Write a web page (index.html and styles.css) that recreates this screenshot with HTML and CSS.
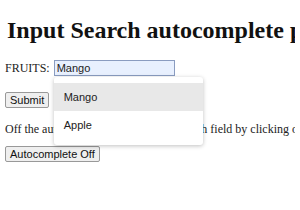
FILE: index.html
```html
<!DOCTYPE html>
<html lang="en">
<head>
    <meta charset="UTF-8">
    <title>Input Search autocomplete</title>
    <link rel="stylesheet" href="styles.css">
</head>
<body>
    <h1>Input Search autocomplete property</h1>
    <form class="search-form">
        <div class="field">
            <label for="fruit">FRUITS:</label>
            <span class="field-wrap">
                <input type="text" id="fruit" class="search-input" value="Mango">
                <ul class="suggestions">
                    <li class="active">Mango</li>
                    <li>Apple</li>
                </ul>
            </span>
        </div>
        <button type="button" class="button">Submit</button>
    </form>
    <p class="note">Off the autocomplete feature of the search field by clicking on the button.</p>
    <button type="button" class="button">Autocomplete Off</button>
</body>
</html>
```

FILE: styles.css
```css
body {
    font-family: "Liberation Serif", serif;
    font-size: 12px;
    color: #222;
    margin: 6px 5px;
    background: #fff;
    white-space: nowrap;
    overflow: hidden;
}
h1 {
    font-size: 24px;
    font-weight: bold;
    color: #111;
    margin: 11px 0 16px 2px;
    line-height: 27px;
}
.field {
    display: flex;
    align-items: center;
    height: 16px;
}
.field label {
    margin-right: 4px;
}
.field-wrap {
    position: relative;
    display: inline-block;
}
.search-input {
    display: block;
    box-sizing: border-box;
    width: 121px;
    height: 16px;
    margin: 0;
    padding: 0 2px;
    border: 1px solid #8a9cc0;
    background: #e8f0fe;
    font-family: "Liberation Sans", sans-serif;
    font-size: 11px;
    color: #222;
    outline: none;
}
.suggestions {
    position: absolute;
    top: 17px;
    left: 0;
    width: 149px;
    margin: 0;
    padding: 6px 0 6px;
    list-style: none;
    background: #fff;
    border-radius: 3px;
    box-shadow: 0 1px 4px rgba(0, 0, 0, 0.25);
    z-index: 2;
}
.suggestions li {
    height: 28px;
    line-height: 28px;
    padding-left: 10px;
    font-family: "Liberation Sans", sans-serif;
    font-size: 11px;
    color: #222;
}
.suggestions li.active {
    background: #e8e8e8;
}
.button {
    font-family: "Liberation Sans", sans-serif;
    font-size: 11px;
    color: #111;
    background: #efefef;
    border: 1px solid #999;
    border-radius: 2px;
    height: 16px;
    padding: 0 4px;
    margin: 0;
}
.search-form .button {
    margin-top: 16px;
}
.note {
    margin: 14px 0 9px;
}
```
